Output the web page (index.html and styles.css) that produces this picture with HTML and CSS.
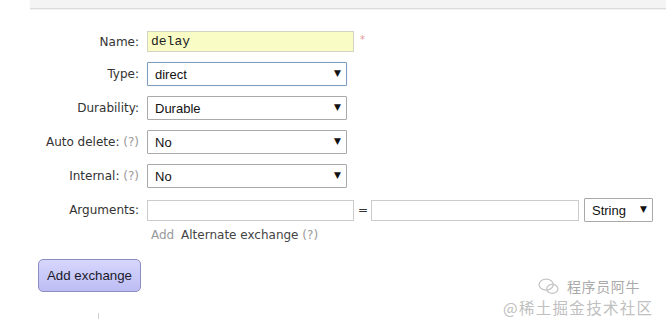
FILE: index.html
```html
<!DOCTYPE html>
<html>
<head>
<meta charset="utf-8">
<link rel="stylesheet" href="styles.css">
</head>
<body>
<div class="band"></div>
<form class="form">
  <label class="lbl">Name:</label>
  <div class="field">
    <input class="txt name" type="text" value="delay">
    <span class="req">*</span>
  </div>

  <label class="lbl">Type:</label>
  <div class="field">
    <span class="sel focus"><select><option>direct</option></select></span>
  </div>

  <label class="lbl">Durability:</label>
  <div class="field">
    <span class="sel"><select><option>Durable</option></select></span>
  </div>

  <label class="lbl">Auto delete: <span class="help">(?)</span></label>
  <div class="field">
    <span class="sel"><select><option>No</option></select></span>
  </div>

  <label class="lbl">Internal: <span class="help">(?)</span></label>
  <div class="field">
    <span class="sel"><select><option>No</option></select></span>
  </div>

  <label class="lbl">Arguments:</label>
  <div class="field args">
    <input class="txt arg" type="text">
    <span class="eq">=</span>
    <input class="txt arg2" type="text">
    <span class="sel small"><select><option>String</option></select></span>
  </div>

  <div class="empty"></div>
  <div class="addrow"><span class="add">Add</span> <span class="alt">Alternate exchange</span> <span class="help">(?)</span></div>
</form>
<div class="actions"><button class="btn" type="button">Add exchange</button></div>
<div class="bottom"></div>
<div class="wm">
  <div class="wm1">
    <svg class="wx" width="24" height="17" viewBox="0 0 24 18"><ellipse cx="9" cy="7" rx="7.5" ry="5.8" fill="none" stroke="#c4c4c4" stroke-width="1.3"/><ellipse cx="15.5" cy="11.5" rx="6" ry="4.8" fill="none" stroke="#c4c4c4" stroke-width="1.3"/></svg>
    <span>程序员阿牛</span>
  </div>
  <div class="wm2">@稀土掘金技术社区</div>
</div>
</body>
</html>
```
FILE: styles.css
```css
html, body { margin: 0; padding: 0; background: #fff; }
body {
  font-family: "DejaVu Sans", Verdana, sans-serif;
  font-size: 12px;
  color: #333;
  width: 666px;
  height: 319px;
  overflow: hidden;
  position: relative;
}
.band {
  margin-left: 30px;
  height: 8px;
  background: #f4f4f4;
  border-bottom: 1px solid #dcdcdc;
  box-shadow: 0 1px 1px #f3f3f3;
}
.form {
  margin-top: 22px;
  display: grid;
  grid-template-columns: 139px 1fr;
  column-gap: 8px;
  row-gap: 10px;
}
.lbl {
  text-align: right;
  align-self: center;
  white-space: nowrap;
}
.help { color: #999; }
.field { display: flex; align-items: center; }
.txt {
  box-sizing: border-box;
  height: 21px;
  border: 1px solid #ccc;
  margin: 0;
  padding: 0 3px;
  outline: none;
}
.name {
  width: 207px;
  background: #fafcc6;
  font-family: "Liberation Mono", "Courier New", monospace;
  font-size: 13px;
  color: #222;
  border-color: #d4d4c4;
}
.req {
  color: #e89a9a;
  font-size: 10px;
  margin-left: 6px;
  align-self: flex-start;
  margin-top: 3px;
}
.sel {
  position: relative;
  display: inline-block;
}
.sel select {
  appearance: none;
  -webkit-appearance: none;
  box-sizing: border-box;
  width: 200px;
  height: 24px;
  margin: 0;
  padding: 0 0 0 7px;
  border: 1px solid #a9a9a9;
  border-radius: 1px;
  background: #fff;
  font-family: "Liberation Sans", Arial, sans-serif;
  font-size: 13px;
  color: #111;
  outline: none;
}
.sel.focus select { border-color: #7f9dc0; box-shadow: 0 0 1px #a9c0de; }
.sel::after {
  content: "▼";
  position: absolute;
  right: 6px;
  top: 6px;
  font-size: 9px;
  color: #111;
  pointer-events: none;
}
.sel.small select { width: 69px; }
.args .arg { width: 207px; }
.eq { width: 10px; margin: 0 3px 0 4px; text-align: center; color: #333; }
.args .arg2 { width: 208px; margin-right: 5px; }
.args .sel { align-self: flex-start; }
.addrow {
  margin-top: -4px;
  padding-left: 4px;
  color: #444;
}
.add { color: #999; margin-right: 3px; }
.actions { margin: 17px 0 0 38px; }
.btn {
  box-sizing: border-box;
  width: 103px;
  height: 33px;
  margin: 0;
  padding: 0;
  border: 1px solid #8c8cbf;
  border-radius: 5px;
  background: linear-gradient(#d6d6fc, #bdbdf5);
  font-family: "Liberation Sans", Arial, sans-serif;
  font-size: 13.3px;
  color: #1a1a2a;
}
.bottom {
  margin: 21px 0 0 98px;
  height: 10px;
  border-left: 1px solid #d0d0d0;
}
.wm {
  position: absolute;
  left: 503px;
  top: 276px;
  width: 163px;
  height: 42px;
  text-shadow: 0 0 1px #fff;
}
.wm1 {
  position: absolute;
  left: 34px;
  top: 0;
  display: flex;
  align-items: center;
  gap: 6px;
  font-family: "Noto Sans CJK SC", sans-serif;
  font-size: 14px;
  line-height: 20px;
  letter-spacing: 0.6px;
  color: #aaa;
}
.wm2 {
  position: absolute;
  left: 0;
  top: 20px;
  font-family: "Noto Sans CJK SC", sans-serif;
  font-size: 15.5px;
  line-height: 22px;
  letter-spacing: 1.3px;
  color: #c0c0c0;
  white-space: nowrap;
}
```
